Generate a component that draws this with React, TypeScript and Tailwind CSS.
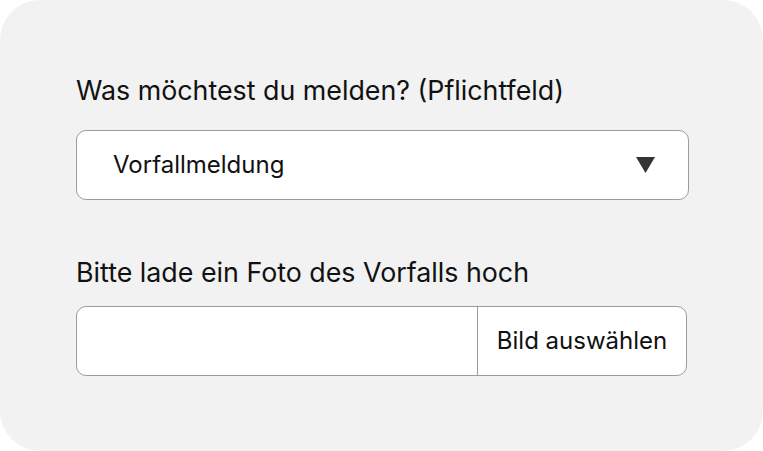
export default function App() {
  return (
    <div className="w-[763px] h-[451px] bg-white">
      <div
        className="w-full h-full bg-[#f2f2f2] rounded-[40px] pl-[76px] pr-[74px] pt-[73px]"
        style={{ fontFamily: "Inter, 'Noto Sans', sans-serif" }}
      >
        <label className="block text-[26.8px] leading-[34px] text-[#111]">
          Was möchtest du melden? (Pflichtfeld)
        </label>
        <div className="mt-[23px] h-[70px] w-[613px] flex items-center justify-between bg-white border border-[#9c9c9c] rounded-[10px] pl-[36px] pr-[33px]">
          <span className="text-[24px] text-[#111]">Vorfallmeldung</span>
          <svg width="19" height="16" viewBox="0 0 19 16">
            <polygon points="0,0 19,0 9.5,16" fill="#333" />
          </svg>
        </div>
        <label className="block mt-[55px] text-[26.8px] leading-[34px] text-[#111]">
          Bitte lade ein Foto des Vorfalls hoch
        </label>
        <div className="mt-[17px] h-[70px] w-[611px] flex bg-white border border-[#9c9c9c] rounded-[10px] overflow-hidden">
          <div className="flex-1" />
          <div className="w-[209px] border-l border-[#9c9c9c] flex items-center justify-center text-[24px] text-[#111]">
            Bild auswählen
          </div>
        </div>
      </div>
    </div>
  );
}
